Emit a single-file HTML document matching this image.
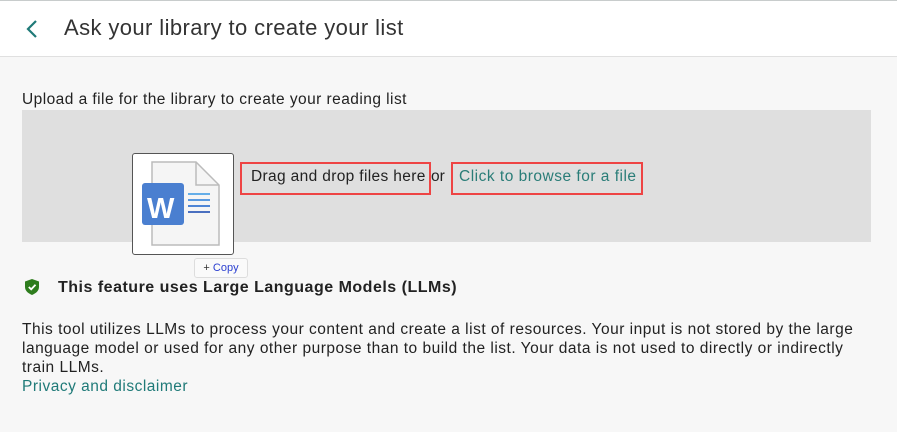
<!DOCTYPE html>
<html><head><style>
body{margin:0;width:897px;height:432px;background:#f7f7f7;font-family:"Liberation Sans",sans-serif;color:#222;position:relative;overflow:hidden}
.a{position:absolute;white-space:nowrap}
</style></head><body>
<div class="a" style="left:0;top:0;width:897px;height:57px;background:#fff;border-top:1px solid #c8cccc;border-bottom:1px solid #e0e0e0;box-sizing:border-box"></div>
<svg class="a" style="left:25px;top:19px" width="14" height="20"><path d="M11 2 L3 10 L11 18" stroke="#1f7a78" stroke-width="2.2" fill="none"/></svg>
<div class="a" style="left:64px;top:15px;font-size:22px;color:#333;letter-spacing:0.4px">Ask your library to create your list</div>
<div class="a" style="left:22px;top:91px;font-size:15.5px;letter-spacing:0.45px">Upload a file for the library to create your reading list</div>
<div class="a" style="left:22px;top:110px;width:849px;height:132px;background:#dfdfdf"></div>
<div class="a" style="left:132px;top:153px;width:100px;height:100px;background:#fff;border:1px solid #555;border-radius:3px"></div>
<svg class="a" style="left:140px;top:161px" width="85" height="90">
<path d="M12 1 H56 L79 24 V84 H12 Z" fill="#f5f5f5" stroke="#bbb" stroke-width="1.5"/>
<path d="M56 1 V24 H79" fill="none" stroke="#bbb" stroke-width="1.5"/>
<rect x="2" y="22" width="42" height="42" rx="3" fill="#4a7fd0"/>
<text x="7" y="57" font-family="Liberation Sans" font-weight="bold" font-size="29" fill="#fff">W</text>
<rect x="48" y="32" width="22" height="2" fill="#65aee8"/><rect x="48" y="38" width="22" height="2" fill="#5a9ae0"/><rect x="48" y="44" width="22" height="2" fill="#4f85d5"/><rect x="48" y="50" width="22" height="2" fill="#4a70c0"/>
</svg>
<div class="a" style="left:194px;top:258px;width:52px;height:18px;background:#fafafa;border:1px solid #ddd;border-radius:3px;font-size:11px;color:#2b3fd0;line-height:18px;text-align:center"><span style="color:#333">+</span> Copy</div>
<div class="a" style="left:240px;top:162px;width:187px;height:29px;border:2px solid #ee4444"></div>
<div class="a" style="left:451px;top:162px;width:188px;height:29px;border:2px solid #ee4444"></div>
<div class="a" style="left:251px;top:168px;font-size:15.5px;letter-spacing:0.35px">Drag and drop files here</div>
<div class="a" style="left:431px;top:168px;font-size:15.5px">or</div>
<div class="a" style="left:459px;top:168px;font-size:15.5px;color:#2a7d78;letter-spacing:0.5px">Click to browse for a file</div>
<svg class="a" style="left:25px;top:279px" width="14" height="16"><path d="M7 0 L14 2.5 V8 C14 12 10.5 14.5 7 16 C3.5 14.5 0 12 0 8 V2.5 Z" fill="#2e7d1e"/><path d="M3.8 8 L6.2 10.3 L10.5 5.8" stroke="#fff" stroke-width="1.8" fill="none"/></svg>
<div class="a" style="left:58px;top:279px;font-size:16px;font-weight:bold;color:#222;letter-spacing:0.5px">This feature uses Large Language Models (LLMs)</div>
<div class="a" style="left:22px;top:320px;font-size:15.5px;line-height:19px;letter-spacing:0.5px">This tool utilizes LLMs to process your content and create a list of resources. Your input is not stored by the large<br>language model or used for any other purpose than to build the list. Your data is not used to directly or indirectly<br>train LLMs.<br><span style="color:#1f7a78">Privacy and disclaimer</span></div>
</body></html>
